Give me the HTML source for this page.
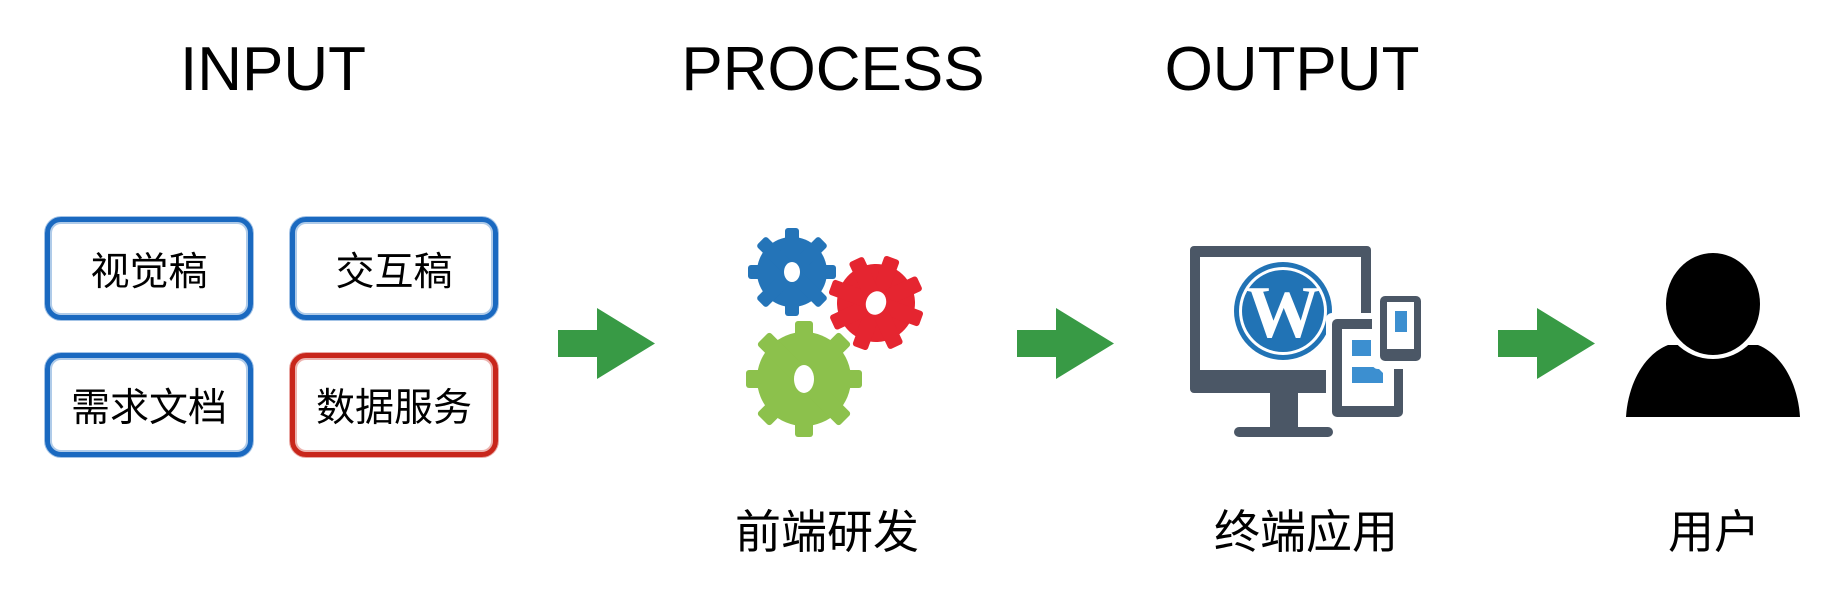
<!DOCTYPE html>
<html><head><meta charset="utf-8"><style>
html,body{margin:0;padding:0;background:#fff;}
body{width:1848px;height:592px;position:relative;overflow:hidden;font-family:"Liberation Sans","Noto Sans CJK SC",sans-serif;}
.h{position:absolute;top:34px;font-size:62px;color:#000;transform:translateX(-50%);white-space:nowrap;}
.box{position:absolute;box-sizing:border-box;border:5px solid #1a69c0;border-radius:16px;display:flex;align-items:center;justify-content:center;font-size:39px;color:#000;box-shadow:inset 0 0 0 2px rgba(26,105,192,0.35), 0 0 0 1px rgba(26,105,192,0.4);}
.red{border-color:#c8261b;box-shadow:inset 0 0 0 2px rgba(200,38,27,0.35),0 0 0 1px rgba(200,38,27,0.4);}
.lbl{position:absolute;top:496px;font-size:46px;color:#000;white-space:nowrap;}
svg{position:absolute;left:0;top:0;}
</style></head><body>
<div class="h" style="left:273px">INPUT</div>
<div class="h" style="left:833px">PROCESS</div>
<div class="h" style="left:1292px">OUTPUT</div>

<div class="box" style="left:45px;top:217px;width:208px;height:103px">视觉稿</div>
<div class="box" style="left:290px;top:217px;width:208px;height:103px">交互稿</div>
<div class="box" style="left:45px;top:353px;width:208px;height:104px">需求文档</div>
<div class="box red" style="left:290px;top:353px;width:208px;height:104px">数据服务</div>

<svg width="1848" height="592" viewBox="0 0 1848 592">
<defs>
<g id="arrow"><path d="M0,22 L39,22 L39,0 L97,35.5 L39,71 L39,49 L0,49 Z" fill="#389a45"/></g>
</defs>
<use href="#arrow" x="558" y="308"/>
<use href="#arrow" x="1017" y="308"/>
<use href="#arrow" x="1498" y="308"/>

<g transform="translate(792,272)" fill="#2474b8">
<circle r="35"/>
<rect x="-7" y="-44" width="14" height="88" rx="3"/><rect x="-7" y="-44" width="14" height="88" rx="3" transform="rotate(45)"/><rect x="-7" y="-44" width="14" height="88" rx="3" transform="rotate(90)"/><rect x="-7" y="-44" width="14" height="88" rx="3" transform="rotate(135)"/>
<ellipse rx="8" ry="10" fill="#fff"/>
</g>
<g transform="translate(804,379)" fill="#8cc14c">
<circle r="47"/>
<rect x="-9" y="-58" width="18" height="116" rx="3"/><rect x="-9" y="-58" width="18" height="116" rx="3" transform="rotate(45)"/><rect x="-9" y="-58" width="18" height="116" rx="3" transform="rotate(90)"/><rect x="-9" y="-58" width="18" height="116" rx="3" transform="rotate(135)"/>
<ellipse rx="10" ry="14" fill="#fff"/>
</g>
<g transform="translate(876,303) rotate(20)" fill="#e52530">
<circle r="39"/>
<rect x="-8" y="-48" width="16" height="96" rx="3"/><rect x="-8" y="-48" width="16" height="96" rx="3" transform="rotate(45)"/><rect x="-8" y="-48" width="16" height="96" rx="3" transform="rotate(90)"/><rect x="-8" y="-48" width="16" height="96" rx="3" transform="rotate(135)"/>
<ellipse rx="10" ry="12" fill="#fff"/>
</g>

<rect x="1190" y="246" width="181" height="147" rx="4" fill="#4b5766"/>
<rect x="1200" y="257" width="161" height="113" fill="#fff"/>
<rect x="1270" y="392" width="28" height="37" fill="#4b5766"/>
<rect x="1234" y="427" width="99" height="10" rx="5" fill="#4b5766"/>
<circle cx="1283" cy="311" r="49" fill="#2173b5"/>
<circle cx="1283" cy="311" r="44" fill="#fff"/>
<circle cx="1283" cy="311" r="41" fill="#2173b5"/>
<text x="1283" y="337" text-anchor="middle" font-family="Liberation Serif,serif" font-weight="bold" font-size="74" fill="#fff">W</text>
<rect x="1326" y="313" width="83" height="110" rx="6" fill="#fff"/>
<rect x="1332" y="319" width="71" height="98" rx="5" fill="#4b5766"/>
<rect x="1342" y="329" width="52" height="77" fill="#fff"/>
<rect x="1352" y="340" width="19" height="16" fill="#3c8fd0"/>
<path d="M1352,367 L1377,367 L1383,373 L1383,383 L1352,383 Z" fill="#3c8fd0"/>
<rect x="1372" y="288" width="57" height="81" rx="6" fill="#fff"/>
<rect x="1380" y="296" width="41" height="65" rx="5" fill="#4b5766"/>
<rect x="1387" y="302" width="27" height="47" fill="#fff"/>
<rect x="1395" y="311" width="12" height="21" fill="#3c8fd0"/>

<path d="M1626,417 C1628,385 1643,355 1668,345 L1758,345 C1783,355 1798,385 1800,417 Z" fill="#000"/>
<ellipse cx="1713" cy="304" rx="53" ry="55" fill="#fff"/>
<ellipse cx="1713" cy="304" rx="47" ry="51" fill="#000"/>
</svg>

<div class="lbl" style="left:735px">前端研发</div>
<div class="lbl" style="left:1214px">终端应用</div>
<div class="lbl" style="left:1668px">用户</div>
</body></html>
